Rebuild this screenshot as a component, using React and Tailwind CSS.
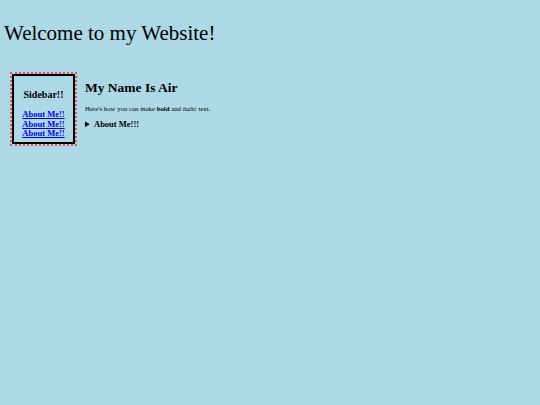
import React from "react";

export default function App() {
  return (
    <div className="min-h-[405px] w-full bg-[#add8e6] text-black font-['Liberation_Serif',serif]">
      <h1 className="pl-[4px] pt-[21px] text-[21px] leading-[24px]">Welcome to my Website!</h1>

      <div className="flex items-start gap-[10px] pl-[12px] pt-[29px]">
        {/* sidebar */}
        <div className="outline-2 outline-dotted outline-[#e8505a] border-2 border-black w-[63px] h-[70px] flex flex-col items-center pt-[13px]">
          <h3 className="font-bold text-[10px] leading-[12px]">Sidebar!!</h3>
          <div className="mt-[9px] flex flex-col items-center text-[8.5px] leading-[9.5px] font-bold">
            <a href="#" className="text-[#0000ee] underline">About Me!!</a>
            <a href="#" className="text-[#0000ee] underline">About Me!!</a>
            <a href="#" className="text-[#0000ee] underline">About Me!!</a>
          </div>
        </div>

        {/* main */}
        <div className="pt-[6px]">
          <h2 className="font-bold text-[13.5px] leading-[16px]">My Name Is Air</h2>
          <p className="mt-[9px] text-[6.8px] leading-[8px]">
            Here's how you can make <b>bold</b> and <i>italic</i> text.
          </p>
          <details className="mt-[6px]">
            <summary className="font-bold text-[8.5px] leading-[10px] cursor-pointer">About Me!!!</summary>
          </details>
        </div>
      </div>
    </div>
  );
}
